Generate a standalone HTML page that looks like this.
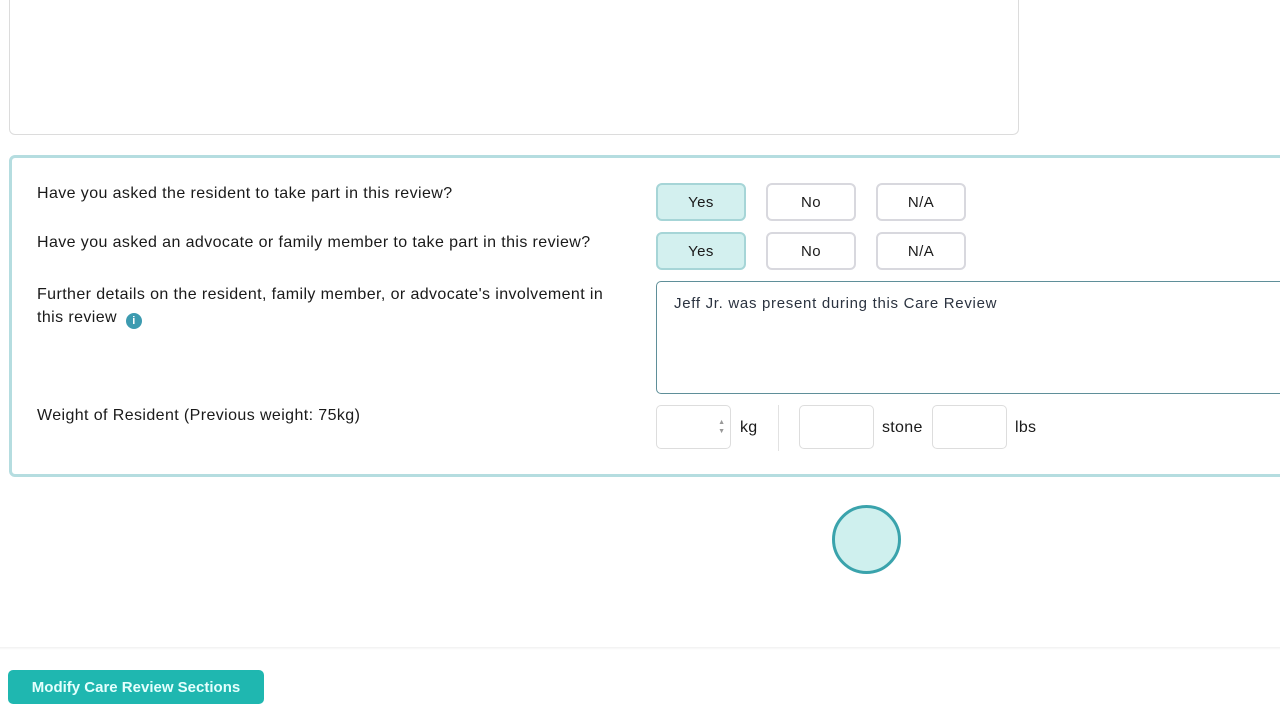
<!DOCTYPE html>
<html><head><style>
body{margin:0;width:1280px;height:720px;background:#fff;font-family:"Liberation Sans",sans-serif;position:relative;overflow:hidden;color:#1a1a1a}
.a{position:absolute}
.top{left:9px;top:-10px;width:1008px;height:143px;border:1px solid #dcdcdc;border-radius:6px}
.card{left:9px;top:155px;width:1280px;height:316px;border:3px solid #b5dde0;border-radius:6px}
.q{font-size:16px;left:37px;letter-spacing:0.4px}
.btn{width:86px;height:34px;border:2px solid #d8d8de;border-radius:6px;font-size:15px;text-align:center;line-height:36px;background:#fff;box-sizing:content-box;letter-spacing:0.4px}
.yes{background:#d3f0ef;border-color:#a6d5d7}
.in{border:1px solid #ddd;border-radius:5px;height:44px;box-sizing:border-box}
.u{font-size:16px;letter-spacing:0.3px}
</style></head><body>
<div class="a top"></div>
<div class="a card"></div>
<div class="a q" style="top:185px">Have you asked the resident to take part in this review?</div>
<div class="a q" style="top:234px">Have you asked an advocate or family member to take part in this review?</div>
<div class="a q" style="top:283px;line-height:23px;width:590px">Further details on the resident, family member, or advocate's involvement in this review <span style="display:inline-block;width:16px;height:16px;border-radius:50%;background:#3d9bb0;color:#fff;font-size:11px;font-weight:bold;text-align:center;line-height:16px;vertical-align:-2px;margin-left:4px;letter-spacing:0">i</span></div>
<div class="a q" style="top:407px">Weight of Resident (Previous weight: 75kg)</div>
<div class="a btn yes" style="left:656px;top:183px">Yes</div>
<div class="a btn" style="left:766px;top:183px">No</div>
<div class="a btn" style="left:876px;top:183px">N/A</div>
<div class="a btn yes" style="left:656px;top:232px">Yes</div>
<div class="a btn" style="left:766px;top:232px">No</div>
<div class="a btn" style="left:876px;top:232px">N/A</div>
<div class="a" style="left:656px;top:281px;width:640px;height:113px;border:1px solid #5f8f99;border-radius:5px;box-sizing:border-box;padding:13px 17px;font-size:15px;color:#2b3340;letter-spacing:0.7px">Jeff Jr. was present during this Care Review</div>
<div class="a in" style="left:656px;top:405px;width:75px"><span class="a" style="right:5px;top:12px;font-size:7px;color:#999;line-height:9px">▲<br>▼</span></div>
<div class="a u" style="left:740px;top:419px">kg</div>
<div class="a" style="left:778px;top:405px;width:1px;height:46px;background:#e2e2e2"></div>
<div class="a in" style="left:799px;top:405px;width:75px"></div>
<div class="a u" style="left:882px;top:419px">stone</div>
<div class="a in" style="left:932px;top:405px;width:75px"></div>
<div class="a u" style="left:1015px;top:419px">lbs</div>
<div class="a" style="left:832px;top:505px;width:63px;height:63px;border:3px solid #3aa3ac;border-radius:50%;background:#cff0ee"></div>
<div class="a" style="left:0;top:647px;width:1280px;height:3px;background:linear-gradient(#f0f0f0,#fff)"></div>
<div class="a" style="left:8px;top:670px;width:256px;height:34px;background:#1fb7b0;border-radius:5px;color:#e4fffd;font-size:15px;font-weight:bold;text-align:center;line-height:36px">Modify Care Review Sections</div>
</body></html>
